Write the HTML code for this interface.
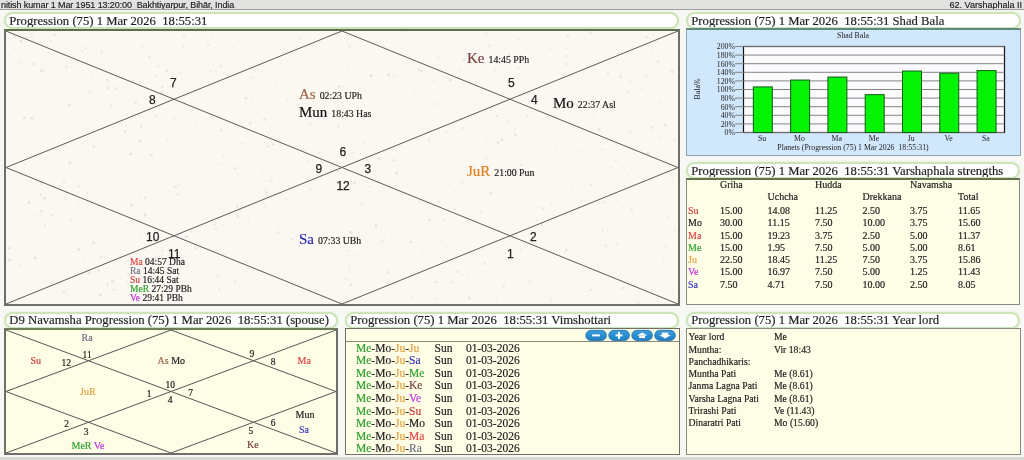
<!DOCTYPE html>
<html><head><meta charset="utf-8">
<style>
*{box-sizing:border-box}
html,body{margin:0;padding:0}
body{width:1024px;height:460px;overflow:hidden;position:relative;background:#f7f8f4;font-family:"Liberation Serif",serif;color:#222}
.abs{position:absolute}
.topbar{left:0;top:0;width:1024px;height:10px;background:#e2e2e0;border-bottom:1px solid #9c9c9c;overflow:hidden;font-family:"Liberation Sans",sans-serif;font-size:9px;color:#222}
.topbar span{position:absolute;white-space:nowrap}
.pill{position:absolute;height:17px;border:2px solid #cce5b8;border-radius:9px;background:#fff;box-shadow:0 0 1.5px 0.5px #e2f1d6;font-size:12.7px;white-space:nowrap;color:#1e1e1e;overflow:hidden}
.pill span{position:absolute;left:3.3px;top:-0.4px}
.box{position:absolute}
#root{-webkit-text-stroke:0.18px currentColor}
.t{position:absolute;white-space:nowrap;line-height:1}
.num{font-family:"Liberation Sans",sans-serif;font-size:12px;color:#222;-webkit-text-stroke:0.25px #222}
.pl{font-size:15px}
.sm{font-size:9.8px;color:#222}
.n9{font-family:"Liberation Serif",serif;font-size:9.5px;color:#222;-webkit-text-stroke:0.2px #222}
</style></head><body>
<div id="root" style="position:absolute;left:0;top:0;width:1024px;height:460px;will-change:transform">
<div class="abs topbar"><span style="left:1px;top:0px;letter-spacing:-0.1px">nitish kumar 1 Mar 1951 13:20:00&nbsp; Bakhtiyarpur, Bihār, India</span><span style="right:2px;top:0px">62. Varshaphala II</span></div>
<div class="pill" style="left:4px;top:12px;width:675px"><span>Progression (75) 1 Mar 2026&nbsp; 18:55:31</span></div>
<div class="pill" style="left:686px;top:12px;width:335px"><span>Progression (75) 1 Mar 2026&nbsp; 18:55:31 Shad Bala</span></div>
<div class="pill" style="left:686px;top:162px;width:334px"><span>Progression (75) 1 Mar 2026&nbsp; 18:55:31 Varshaphala strengths</span></div>
<div class="pill" style="left:4px;top:312px;width:334px"><span style="top:-1.4px">D9 Navamsha Progression (75) 1 Mar 2026&nbsp; 18:55:31 (spouse)</span></div>
<div class="pill" style="left:345px;top:312px;width:334px"><span style="top:-1.4px">Progression (75) 1 Mar 2026&nbsp; 18:55:31 Vimshottari</span></div>
<div class="pill" style="left:686px;top:312px;width:334px"><span style="top:-1.4px">Progression (75) 1 Mar 2026&nbsp; 18:55:31 Year lord</span></div>
<div class="box" style="left:4px;top:29px;width:676px;height:277px;background:#fbf8f2;border:2px solid #6e6e6a;border-top-color:#5f6e4a"></div>
<svg class="abs" style="left:0;top:0" width="1024" height="460"><g fill="#b8a0a0"><circle cx="224.0" cy="72.9" r="1.3" fill-opacity="0.07"/><circle cx="557.3" cy="57.5" r="1.0" fill-opacity="0.07"/><circle cx="347.0" cy="42.2" r="0.8" fill-opacity="0.14"/><circle cx="168.2" cy="181.3" r="0.5" fill-opacity="0.23"/><circle cx="89.9" cy="92.5" r="1.3" fill-opacity="0.18"/><circle cx="48.4" cy="190.7" r="0.5" fill-opacity="0.26"/><circle cx="38.2" cy="264.6" r="0.7" fill-opacity="0.14"/><circle cx="369.3" cy="186.7" r="1.0" fill-opacity="0.22"/><circle cx="128.1" cy="189.6" r="1.3" fill-opacity="0.10"/><circle cx="72.3" cy="225.0" r="1.0" fill-opacity="0.07"/><circle cx="145.0" cy="216.4" r="0.8" fill-opacity="0.22"/><circle cx="319.0" cy="282.3" r="0.7" fill-opacity="0.12"/><circle cx="539.2" cy="221.4" r="0.6" fill-opacity="0.08"/><circle cx="208.2" cy="166.2" r="0.7" fill-opacity="0.21"/><circle cx="199.9" cy="297.6" r="0.5" fill-opacity="0.16"/><circle cx="117.5" cy="124.7" r="0.8" fill-opacity="0.14"/><circle cx="651.6" cy="53.0" r="1.0" fill-opacity="0.17"/><circle cx="593.6" cy="117.0" r="1.3" fill-opacity="0.13"/><circle cx="339.8" cy="248.0" r="0.5" fill-opacity="0.23"/><circle cx="639.9" cy="160.5" r="1.3" fill-opacity="0.07"/><circle cx="496.9" cy="115.9" r="1.0" fill-opacity="0.26"/><circle cx="557.7" cy="109.1" r="0.8" fill-opacity="0.24"/><circle cx="239.5" cy="286.9" r="0.7" fill-opacity="0.09"/><circle cx="85.5" cy="48.0" r="1.6" fill-opacity="0.12"/><circle cx="501.7" cy="139.8" r="1.6" fill-opacity="0.16"/><circle cx="118.5" cy="140.8" r="0.7" fill-opacity="0.24"/><circle cx="555.9" cy="266.1" r="0.7" fill-opacity="0.20"/><circle cx="667.9" cy="217.0" r="0.8" fill-opacity="0.25"/><circle cx="108.1" cy="79.8" r="0.6" fill-opacity="0.19"/><circle cx="15.1" cy="257.2" r="0.6" fill-opacity="0.11"/><circle cx="9.7" cy="145.5" r="0.7" fill-opacity="0.18"/><circle cx="220.5" cy="66.0" r="1.6" fill-opacity="0.16"/><circle cx="420.8" cy="215.3" r="0.5" fill-opacity="0.15"/><circle cx="590.6" cy="290.0" r="1.3" fill-opacity="0.22"/><circle cx="269.9" cy="140.1" r="0.5" fill-opacity="0.16"/><circle cx="275.3" cy="83.7" r="0.6" fill-opacity="0.15"/><circle cx="80.7" cy="194.8" r="0.5" fill-opacity="0.06"/><circle cx="108.3" cy="59.5" r="0.7" fill-opacity="0.18"/><circle cx="54.1" cy="88.4" r="0.8" fill-opacity="0.09"/><circle cx="176.0" cy="126.1" r="0.7" fill-opacity="0.15"/><circle cx="84.3" cy="164.3" r="0.8" fill-opacity="0.16"/><circle cx="215.9" cy="71.1" r="1.3" fill-opacity="0.13"/><circle cx="184.4" cy="256.6" r="0.6" fill-opacity="0.16"/><circle cx="144.5" cy="290.0" r="0.7" fill-opacity="0.09"/><circle cx="370.9" cy="39.3" r="1.0" fill-opacity="0.12"/><circle cx="437.8" cy="56.7" r="1.6" fill-opacity="0.11"/><circle cx="252.7" cy="77.3" r="1.6" fill-opacity="0.10"/><circle cx="369.8" cy="168.2" r="1.3" fill-opacity="0.10"/><circle cx="550.7" cy="298.9" r="1.6" fill-opacity="0.10"/><circle cx="167.4" cy="140.6" r="1.6" fill-opacity="0.11"/><circle cx="353.8" cy="128.4" r="0.5" fill-opacity="0.26"/><circle cx="536.4" cy="160.0" r="0.6" fill-opacity="0.20"/><circle cx="647.9" cy="153.2" r="1.3" fill-opacity="0.26"/><circle cx="646.9" cy="130.8" r="0.6" fill-opacity="0.08"/><circle cx="322.0" cy="123.5" r="0.8" fill-opacity="0.18"/><circle cx="610.2" cy="259.8" r="0.8" fill-opacity="0.24"/><circle cx="237.5" cy="206.3" r="1.6" fill-opacity="0.19"/><circle cx="616.6" cy="244.0" r="1.6" fill-opacity="0.10"/><circle cx="602.6" cy="149.6" r="1.3" fill-opacity="0.13"/><circle cx="543.6" cy="295.3" r="0.8" fill-opacity="0.15"/><circle cx="505.0" cy="55.0" r="0.6" fill-opacity="0.09"/><circle cx="92.1" cy="73.0" r="0.8" fill-opacity="0.22"/><circle cx="104.9" cy="256.0" r="0.8" fill-opacity="0.19"/><circle cx="241.8" cy="180.7" r="0.6" fill-opacity="0.06"/><circle cx="542.6" cy="228.8" r="0.5" fill-opacity="0.17"/><circle cx="632.5" cy="149.6" r="1.6" fill-opacity="0.10"/><circle cx="592.5" cy="39.6" r="0.6" fill-opacity="0.12"/><circle cx="168.2" cy="190.9" r="0.7" fill-opacity="0.17"/><circle cx="565.9" cy="48.5" r="1.3" fill-opacity="0.13"/><circle cx="314.0" cy="190.1" r="1.0" fill-opacity="0.14"/><circle cx="621.9" cy="167.9" r="1.0" fill-opacity="0.09"/><circle cx="349.1" cy="268.5" r="1.6" fill-opacity="0.10"/><circle cx="9.6" cy="248.6" r="0.6" fill-opacity="0.09"/><circle cx="421.8" cy="64.6" r="0.5" fill-opacity="0.13"/><circle cx="354.3" cy="182.5" r="1.6" fill-opacity="0.22"/><circle cx="598.8" cy="47.4" r="0.6" fill-opacity="0.12"/><circle cx="524.4" cy="169.6" r="1.0" fill-opacity="0.07"/><circle cx="606.0" cy="49.2" r="0.7" fill-opacity="0.18"/><circle cx="345.7" cy="170.8" r="1.3" fill-opacity="0.12"/><circle cx="347.5" cy="250.8" r="1.0" fill-opacity="0.25"/><circle cx="475.5" cy="269.5" r="0.7" fill-opacity="0.24"/><circle cx="605.1" cy="86.9" r="0.8" fill-opacity="0.09"/><circle cx="88.5" cy="151.8" r="0.5" fill-opacity="0.19"/><circle cx="294.0" cy="89.6" r="0.7" fill-opacity="0.22"/><circle cx="608.0" cy="73.9" r="1.3" fill-opacity="0.19"/><circle cx="252.3" cy="100.6" r="0.6" fill-opacity="0.25"/><circle cx="154.1" cy="290.1" r="0.8" fill-opacity="0.24"/><circle cx="116.1" cy="213.0" r="0.6" fill-opacity="0.09"/><circle cx="296.1" cy="171.7" r="0.7" fill-opacity="0.14"/><circle cx="245.9" cy="57.0" r="0.7" fill-opacity="0.06"/><circle cx="378.2" cy="151.4" r="0.5" fill-opacity="0.14"/><circle cx="353.7" cy="112.1" r="0.5" fill-opacity="0.08"/><circle cx="622.4" cy="93.9" r="0.5" fill-opacity="0.08"/><circle cx="189.2" cy="277.5" r="0.6" fill-opacity="0.11"/><circle cx="93.8" cy="146.4" r="1.3" fill-opacity="0.22"/><circle cx="180.3" cy="72.5" r="1.0" fill-opacity="0.17"/><circle cx="476.3" cy="56.2" r="0.5" fill-opacity="0.22"/><circle cx="129.8" cy="274.6" r="0.7" fill-opacity="0.25"/><circle cx="432.1" cy="249.2" r="0.5" fill-opacity="0.18"/><circle cx="156.0" cy="103.7" r="0.5" fill-opacity="0.15"/><circle cx="234.2" cy="181.9" r="0.7" fill-opacity="0.18"/><circle cx="35.9" cy="224.3" r="0.5" fill-opacity="0.25"/><circle cx="182.5" cy="81.1" r="0.7" fill-opacity="0.19"/><circle cx="362.8" cy="87.8" r="0.8" fill-opacity="0.16"/><circle cx="126.2" cy="126.0" r="0.5" fill-opacity="0.26"/><circle cx="31.8" cy="37.0" r="1.0" fill-opacity="0.17"/><circle cx="133.9" cy="160.7" r="0.8" fill-opacity="0.08"/><circle cx="555.7" cy="149.1" r="0.8" fill-opacity="0.17"/><circle cx="602.4" cy="295.0" r="0.7" fill-opacity="0.20"/><circle cx="665.2" cy="124.9" r="1.6" fill-opacity="0.24"/><circle cx="495.3" cy="69.9" r="0.7" fill-opacity="0.26"/><circle cx="567.8" cy="35.9" r="1.3" fill-opacity="0.21"/><circle cx="178.2" cy="76.2" r="0.5" fill-opacity="0.19"/><circle cx="262.2" cy="169.1" r="0.7" fill-opacity="0.18"/><circle cx="471.1" cy="44.3" r="0.6" fill-opacity="0.09"/><circle cx="305.7" cy="103.3" r="0.7" fill-opacity="0.25"/><circle cx="373.5" cy="98.2" r="0.7" fill-opacity="0.10"/><circle cx="129.6" cy="122.9" r="0.5" fill-opacity="0.15"/><circle cx="343.9" cy="86.5" r="1.0" fill-opacity="0.22"/><circle cx="67.9" cy="253.4" r="0.6" fill-opacity="0.14"/><circle cx="34.9" cy="38.1" r="0.7" fill-opacity="0.19"/><circle cx="63.6" cy="291.5" r="1.6" fill-opacity="0.21"/><circle cx="447.6" cy="226.0" r="1.0" fill-opacity="0.14"/><circle cx="225.5" cy="298.9" r="0.6" fill-opacity="0.12"/><circle cx="421.5" cy="71.2" r="1.6" fill-opacity="0.23"/><circle cx="604.6" cy="202.0" r="1.3" fill-opacity="0.20"/><circle cx="345.7" cy="278.6" r="1.6" fill-opacity="0.16"/><circle cx="566.4" cy="250.1" r="1.6" fill-opacity="0.20"/><circle cx="541.6" cy="224.7" r="1.3" fill-opacity="0.19"/><circle cx="64.0" cy="43.3" r="1.3" fill-opacity="0.13"/><circle cx="77.3" cy="258.5" r="1.0" fill-opacity="0.07"/><circle cx="19.6" cy="176.0" r="0.6" fill-opacity="0.16"/><circle cx="9.2" cy="248.2" r="1.3" fill-opacity="0.25"/><circle cx="608.6" cy="56.9" r="1.0" fill-opacity="0.07"/><circle cx="500.6" cy="100.3" r="0.5" fill-opacity="0.23"/><circle cx="164.3" cy="237.0" r="0.6" fill-opacity="0.21"/><circle cx="660.7" cy="165.9" r="0.8" fill-opacity="0.08"/><circle cx="617.0" cy="109.9" r="0.5" fill-opacity="0.18"/><circle cx="437.7" cy="53.0" r="0.6" fill-opacity="0.13"/><circle cx="443.5" cy="219.8" r="1.0" fill-opacity="0.17"/><circle cx="15.4" cy="48.4" r="0.7" fill-opacity="0.25"/><circle cx="73.7" cy="91.0" r="0.8" fill-opacity="0.12"/><circle cx="353.1" cy="157.9" r="0.8" fill-opacity="0.21"/><circle cx="672.5" cy="180.8" r="0.7" fill-opacity="0.26"/><circle cx="634.3" cy="36.7" r="0.8" fill-opacity="0.08"/><circle cx="346.4" cy="301.5" r="0.7" fill-opacity="0.14"/><circle cx="621.1" cy="284.2" r="0.5" fill-opacity="0.18"/><circle cx="102.0" cy="174.0" r="0.7" fill-opacity="0.09"/><circle cx="556.5" cy="169.9" r="0.5" fill-opacity="0.20"/><circle cx="162.0" cy="275.3" r="0.8" fill-opacity="0.14"/><circle cx="113.6" cy="289.4" r="1.3" fill-opacity="0.15"/><circle cx="209.3" cy="70.1" r="0.7" fill-opacity="0.14"/><circle cx="88.0" cy="121.8" r="0.7" fill-opacity="0.21"/><circle cx="569.2" cy="64.5" r="0.6" fill-opacity="0.20"/><circle cx="611.0" cy="110.5" r="0.7" fill-opacity="0.07"/><circle cx="268.4" cy="267.8" r="0.5" fill-opacity="0.13"/><circle cx="293.8" cy="106.6" r="0.5" fill-opacity="0.12"/><circle cx="41.6" cy="211.4" r="1.3" fill-opacity="0.25"/><circle cx="174.0" cy="104.0" r="1.0" fill-opacity="0.12"/><circle cx="525.0" cy="244.8" r="0.8" fill-opacity="0.24"/><circle cx="551.0" cy="203.0" r="1.0" fill-opacity="0.17"/><circle cx="489.1" cy="45.4" r="1.3" fill-opacity="0.14"/><circle cx="419.0" cy="69.6" r="1.6" fill-opacity="0.12"/><circle cx="39.8" cy="283.2" r="0.6" fill-opacity="0.09"/><circle cx="285.0" cy="108.4" r="0.7" fill-opacity="0.21"/><circle cx="661.1" cy="102.5" r="1.3" fill-opacity="0.11"/><circle cx="330.7" cy="213.3" r="0.5" fill-opacity="0.09"/><circle cx="115.3" cy="88.3" r="1.6" fill-opacity="0.16"/><circle cx="154.4" cy="277.6" r="1.6" fill-opacity="0.15"/><circle cx="100.5" cy="84.1" r="0.5" fill-opacity="0.09"/><circle cx="379.4" cy="118.5" r="0.7" fill-opacity="0.11"/><circle cx="388.6" cy="272.4" r="1.3" fill-opacity="0.23"/><circle cx="263.5" cy="234.1" r="0.6" fill-opacity="0.14"/><circle cx="233.6" cy="48.8" r="0.7" fill-opacity="0.17"/><circle cx="248.3" cy="218.1" r="1.0" fill-opacity="0.19"/><circle cx="585.1" cy="90.5" r="0.7" fill-opacity="0.24"/><circle cx="264.7" cy="207.0" r="0.8" fill-opacity="0.25"/><circle cx="575.6" cy="268.6" r="0.5" fill-opacity="0.09"/><circle cx="291.9" cy="239.0" r="1.6" fill-opacity="0.15"/><circle cx="400.4" cy="32.0" r="0.8" fill-opacity="0.25"/><circle cx="628.9" cy="175.1" r="0.8" fill-opacity="0.25"/><circle cx="173.5" cy="61.6" r="0.6" fill-opacity="0.09"/><circle cx="658.2" cy="61.5" r="1.6" fill-opacity="0.20"/><circle cx="440.7" cy="239.3" r="0.8" fill-opacity="0.08"/><circle cx="527.5" cy="32.4" r="0.6" fill-opacity="0.11"/><circle cx="623.3" cy="206.9" r="0.7" fill-opacity="0.25"/><circle cx="426.7" cy="175.2" r="0.8" fill-opacity="0.20"/><circle cx="82.1" cy="51.1" r="1.0" fill-opacity="0.25"/><circle cx="135.4" cy="102.7" r="1.6" fill-opacity="0.18"/><circle cx="14.0" cy="113.7" r="0.8" fill-opacity="0.12"/><circle cx="219.0" cy="259.5" r="0.6" fill-opacity="0.16"/><circle cx="164.3" cy="99.0" r="0.8" fill-opacity="0.20"/><circle cx="213.0" cy="37.9" r="0.8" fill-opacity="0.24"/><circle cx="440.6" cy="54.0" r="0.6" fill-opacity="0.19"/><circle cx="626.9" cy="93.5" r="0.5" fill-opacity="0.20"/><circle cx="488.3" cy="130.2" r="0.8" fill-opacity="0.10"/><circle cx="541.0" cy="232.3" r="1.0" fill-opacity="0.07"/><circle cx="339.1" cy="86.3" r="1.6" fill-opacity="0.22"/><circle cx="161.6" cy="92.0" r="1.6" fill-opacity="0.24"/><circle cx="80.0" cy="201.0" r="1.0" fill-opacity="0.10"/><circle cx="156.6" cy="145.0" r="1.3" fill-opacity="0.07"/><circle cx="405.5" cy="281.8" r="0.5" fill-opacity="0.10"/><circle cx="659.7" cy="70.5" r="0.5" fill-opacity="0.20"/><circle cx="130.4" cy="153.9" r="1.3" fill-opacity="0.24"/><circle cx="497.9" cy="302.3" r="0.6" fill-opacity="0.13"/><circle cx="131.3" cy="285.6" r="1.3" fill-opacity="0.15"/><circle cx="215.9" cy="228.6" r="1.6" fill-opacity="0.13"/><circle cx="229.2" cy="77.9" r="0.5" fill-opacity="0.08"/><circle cx="61.1" cy="145.9" r="0.5" fill-opacity="0.17"/><circle cx="515.4" cy="135.0" r="1.6" fill-opacity="0.22"/><circle cx="557.7" cy="149.2" r="0.5" fill-opacity="0.20"/><circle cx="138.1" cy="178.8" r="0.8" fill-opacity="0.10"/><circle cx="251.0" cy="275.1" r="0.5" fill-opacity="0.19"/><circle cx="173.2" cy="201.5" r="0.8" fill-opacity="0.07"/><circle cx="30.4" cy="49.0" r="0.5" fill-opacity="0.11"/><circle cx="507.7" cy="275.5" r="0.7" fill-opacity="0.13"/><circle cx="231.4" cy="290.5" r="0.5" fill-opacity="0.11"/><circle cx="487.1" cy="117.8" r="0.7" fill-opacity="0.12"/><circle cx="490.5" cy="193.4" r="1.6" fill-opacity="0.19"/><circle cx="639.0" cy="38.6" r="0.6" fill-opacity="0.08"/><circle cx="486.4" cy="158.2" r="1.6" fill-opacity="0.14"/><circle cx="175.2" cy="148.5" r="0.8" fill-opacity="0.09"/><circle cx="339.7" cy="34.4" r="1.3" fill-opacity="0.12"/><circle cx="470.7" cy="73.0" r="0.6" fill-opacity="0.13"/><circle cx="221.1" cy="130.1" r="1.6" fill-opacity="0.18"/><circle cx="350.0" cy="138.1" r="0.6" fill-opacity="0.11"/><circle cx="50.4" cy="41.2" r="1.0" fill-opacity="0.17"/><circle cx="114.7" cy="147.6" r="0.5" fill-opacity="0.26"/><circle cx="184.5" cy="54.8" r="0.5" fill-opacity="0.14"/><circle cx="669.2" cy="295.4" r="0.6" fill-opacity="0.11"/><circle cx="286.3" cy="200.1" r="1.3" fill-opacity="0.11"/><circle cx="367.8" cy="241.7" r="1.6" fill-opacity="0.08"/><circle cx="570.4" cy="111.6" r="1.0" fill-opacity="0.11"/><circle cx="177.2" cy="102.6" r="0.8" fill-opacity="0.11"/><circle cx="171.4" cy="73.6" r="1.0" fill-opacity="0.10"/><circle cx="50.4" cy="100.2" r="0.6" fill-opacity="0.16"/><circle cx="162.0" cy="251.1" r="1.3" fill-opacity="0.15"/><circle cx="31.8" cy="33.2" r="1.6" fill-opacity="0.11"/><circle cx="307.4" cy="133.3" r="0.7" fill-opacity="0.11"/><circle cx="40.8" cy="194.7" r="1.6" fill-opacity="0.18"/><circle cx="630.2" cy="132.9" r="1.6" fill-opacity="0.10"/><circle cx="411.0" cy="242.0" r="1.3" fill-opacity="0.25"/><circle cx="77.9" cy="193.6" r="1.0" fill-opacity="0.13"/><circle cx="32.1" cy="124.1" r="0.5" fill-opacity="0.10"/><circle cx="177.8" cy="194.4" r="1.3" fill-opacity="0.24"/><circle cx="552.9" cy="253.9" r="0.8" fill-opacity="0.20"/><circle cx="131.0" cy="116.6" r="0.6" fill-opacity="0.07"/><circle cx="339.1" cy="163.0" r="0.8" fill-opacity="0.08"/><circle cx="271.8" cy="181.1" r="1.3" fill-opacity="0.17"/><circle cx="444.5" cy="139.8" r="0.7" fill-opacity="0.14"/><circle cx="196.8" cy="115.4" r="0.5" fill-opacity="0.12"/><circle cx="386.6" cy="128.8" r="0.8" fill-opacity="0.06"/><circle cx="520.7" cy="249.4" r="1.3" fill-opacity="0.10"/><circle cx="494.8" cy="87.2" r="0.5" fill-opacity="0.15"/><circle cx="111.9" cy="62.8" r="0.5" fill-opacity="0.14"/><circle cx="598.5" cy="156.9" r="0.6" fill-opacity="0.09"/><circle cx="41.6" cy="70.6" r="1.6" fill-opacity="0.24"/><circle cx="66.7" cy="200.6" r="0.7" fill-opacity="0.21"/><circle cx="122.0" cy="126.3" r="0.6" fill-opacity="0.16"/><circle cx="627.1" cy="61.5" r="0.8" fill-opacity="0.21"/><circle cx="537.7" cy="250.1" r="0.7" fill-opacity="0.09"/><circle cx="638.9" cy="296.4" r="0.8" fill-opacity="0.12"/><circle cx="414.1" cy="204.5" r="0.5" fill-opacity="0.24"/><circle cx="422.6" cy="255.5" r="0.6" fill-opacity="0.19"/><circle cx="580.9" cy="200.3" r="1.0" fill-opacity="0.23"/><circle cx="562.6" cy="81.6" r="0.6" fill-opacity="0.07"/><circle cx="635.8" cy="74.4" r="0.7" fill-opacity="0.08"/><circle cx="172.5" cy="228.4" r="0.6" fill-opacity="0.07"/><circle cx="383.8" cy="237.3" r="0.5" fill-opacity="0.19"/><circle cx="224.2" cy="137.6" r="0.8" fill-opacity="0.17"/><circle cx="427.1" cy="115.0" r="0.8" fill-opacity="0.12"/><circle cx="174.0" cy="137.5" r="0.7" fill-opacity="0.15"/><circle cx="300.7" cy="38.3" r="1.0" fill-opacity="0.26"/><circle cx="318.7" cy="153.1" r="1.0" fill-opacity="0.22"/><circle cx="314.1" cy="80.7" r="0.8" fill-opacity="0.14"/><circle cx="52.0" cy="129.2" r="0.7" fill-opacity="0.08"/><circle cx="303.1" cy="170.3" r="0.5" fill-opacity="0.07"/><circle cx="94.3" cy="281.9" r="0.7" fill-opacity="0.22"/><circle cx="349.7" cy="46.7" r="1.0" fill-opacity="0.24"/><circle cx="444.3" cy="244.5" r="0.5" fill-opacity="0.23"/><circle cx="674.4" cy="230.4" r="1.6" fill-opacity="0.08"/><circle cx="95.2" cy="272.0" r="0.7" fill-opacity="0.25"/><circle cx="620.7" cy="76.7" r="1.6" fill-opacity="0.20"/><circle cx="155.2" cy="257.8" r="1.0" fill-opacity="0.21"/><circle cx="113.4" cy="275.0" r="0.7" fill-opacity="0.24"/><circle cx="312.8" cy="100.9" r="0.8" fill-opacity="0.10"/><circle cx="183.1" cy="169.1" r="0.7" fill-opacity="0.13"/><circle cx="140.3" cy="141.3" r="1.3" fill-opacity="0.25"/><circle cx="462.4" cy="274.7" r="0.6" fill-opacity="0.22"/><circle cx="184.1" cy="240.2" r="0.5" fill-opacity="0.19"/><circle cx="248.1" cy="268.6" r="1.0" fill-opacity="0.16"/><circle cx="468.4" cy="274.8" r="0.7" fill-opacity="0.26"/><circle cx="429.0" cy="138.8" r="1.6" fill-opacity="0.13"/><circle cx="258.7" cy="132.0" r="0.6" fill-opacity="0.13"/><circle cx="519.3" cy="151.9" r="0.6" fill-opacity="0.18"/><circle cx="648.8" cy="112.3" r="1.0" fill-opacity="0.11"/><circle cx="435.3" cy="298.7" r="1.0" fill-opacity="0.25"/><circle cx="607.1" cy="230.7" r="1.3" fill-opacity="0.07"/><circle cx="107.1" cy="199.0" r="0.8" fill-opacity="0.14"/><circle cx="250.9" cy="44.9" r="0.8" fill-opacity="0.11"/><circle cx="444.6" cy="38.0" r="0.5" fill-opacity="0.17"/><circle cx="210.5" cy="173.8" r="1.0" fill-opacity="0.10"/><circle cx="398.0" cy="191.6" r="0.6" fill-opacity="0.13"/><circle cx="562.1" cy="75.0" r="0.5" fill-opacity="0.25"/><circle cx="170.2" cy="72.5" r="0.5" fill-opacity="0.07"/><circle cx="103.9" cy="212.3" r="0.7" fill-opacity="0.14"/><circle cx="184.0" cy="35.1" r="1.3" fill-opacity="0.22"/><circle cx="605.1" cy="193.2" r="1.0" fill-opacity="0.15"/><circle cx="634.9" cy="230.8" r="0.6" fill-opacity="0.09"/><circle cx="7.3" cy="48.7" r="0.5" fill-opacity="0.14"/><circle cx="166.2" cy="47.8" r="1.6" fill-opacity="0.08"/><circle cx="417.5" cy="210.0" r="0.6" fill-opacity="0.09"/><circle cx="140.7" cy="196.8" r="1.0" fill-opacity="0.19"/><circle cx="285.2" cy="198.2" r="1.0" fill-opacity="0.12"/><circle cx="208.2" cy="45.1" r="1.3" fill-opacity="0.22"/><circle cx="486.3" cy="33.7" r="1.6" fill-opacity="0.15"/><circle cx="618.2" cy="53.8" r="1.3" fill-opacity="0.15"/><circle cx="158.4" cy="60.5" r="0.6" fill-opacity="0.19"/><circle cx="89.6" cy="273.5" r="1.3" fill-opacity="0.25"/><circle cx="183.4" cy="46.2" r="1.3" fill-opacity="0.17"/><circle cx="299.2" cy="245.7" r="1.0" fill-opacity="0.25"/><circle cx="205.1" cy="283.6" r="0.6" fill-opacity="0.08"/><circle cx="347.0" cy="78.0" r="0.6" fill-opacity="0.23"/><circle cx="142.9" cy="75.1" r="0.7" fill-opacity="0.10"/><circle cx="267.4" cy="194.9" r="0.8" fill-opacity="0.24"/><circle cx="429.6" cy="219.8" r="1.3" fill-opacity="0.23"/><circle cx="366.4" cy="160.0" r="1.0" fill-opacity="0.20"/><circle cx="581.5" cy="150.5" r="1.3" fill-opacity="0.11"/><circle cx="599.8" cy="245.9" r="0.8" fill-opacity="0.18"/><circle cx="59.1" cy="278.8" r="0.6" fill-opacity="0.07"/><circle cx="82.0" cy="200.6" r="0.6" fill-opacity="0.13"/><circle cx="102.0" cy="39.8" r="0.5" fill-opacity="0.09"/><circle cx="438.2" cy="43.6" r="0.5" fill-opacity="0.21"/><circle cx="51.1" cy="192.0" r="0.7" fill-opacity="0.10"/><circle cx="646.6" cy="176.7" r="1.3" fill-opacity="0.07"/><circle cx="588.4" cy="279.8" r="0.8" fill-opacity="0.08"/><circle cx="144.8" cy="62.3" r="0.5" fill-opacity="0.25"/><circle cx="617.4" cy="236.3" r="0.5" fill-opacity="0.23"/><circle cx="430.1" cy="109.9" r="0.5" fill-opacity="0.09"/><circle cx="537.6" cy="207.2" r="0.7" fill-opacity="0.12"/><circle cx="290.9" cy="37.7" r="0.7" fill-opacity="0.25"/><circle cx="39.4" cy="237.9" r="0.7" fill-opacity="0.21"/><circle cx="410.3" cy="161.0" r="0.7" fill-opacity="0.18"/><circle cx="27.8" cy="143.9" r="0.8" fill-opacity="0.16"/><circle cx="72.9" cy="159.1" r="0.5" fill-opacity="0.17"/><circle cx="152.1" cy="265.7" r="0.5" fill-opacity="0.17"/><circle cx="199.4" cy="150.2" r="1.0" fill-opacity="0.10"/><circle cx="517.7" cy="297.0" r="0.5" fill-opacity="0.13"/><circle cx="71.1" cy="220.4" r="1.6" fill-opacity="0.10"/><circle cx="338.4" cy="126.1" r="1.6" fill-opacity="0.16"/><circle cx="394.3" cy="75.1" r="1.6" fill-opacity="0.10"/><circle cx="475.7" cy="167.0" r="0.5" fill-opacity="0.25"/><circle cx="520.8" cy="164.9" r="1.3" fill-opacity="0.17"/><circle cx="77.1" cy="120.5" r="0.5" fill-opacity="0.14"/><circle cx="271.4" cy="273.3" r="0.5" fill-opacity="0.14"/><circle cx="439.7" cy="132.8" r="0.7" fill-opacity="0.11"/><circle cx="610.8" cy="167.8" r="0.8" fill-opacity="0.26"/><circle cx="429.6" cy="287.8" r="0.6" fill-opacity="0.17"/><circle cx="512.5" cy="236.1" r="1.3" fill-opacity="0.07"/><circle cx="396.7" cy="173.4" r="1.6" fill-opacity="0.23"/><circle cx="450.6" cy="233.1" r="0.6" fill-opacity="0.15"/><circle cx="468.7" cy="101.7" r="0.6" fill-opacity="0.09"/><circle cx="316.6" cy="271.9" r="0.6" fill-opacity="0.16"/><circle cx="186.2" cy="236.5" r="1.6" fill-opacity="0.23"/><circle cx="110.6" cy="74.3" r="0.6" fill-opacity="0.20"/><circle cx="410.9" cy="126.5" r="0.6" fill-opacity="0.13"/><circle cx="133.8" cy="296.3" r="1.3" fill-opacity="0.26"/><circle cx="117.3" cy="210.3" r="0.6" fill-opacity="0.14"/><circle cx="666.2" cy="247.4" r="1.3" fill-opacity="0.12"/><circle cx="190.5" cy="61.6" r="0.5" fill-opacity="0.12"/><circle cx="600.1" cy="157.7" r="0.5" fill-opacity="0.14"/><circle cx="537.0" cy="219.9" r="1.0" fill-opacity="0.26"/><circle cx="205.5" cy="38.0" r="0.7" fill-opacity="0.18"/><circle cx="278.2" cy="232.8" r="1.6" fill-opacity="0.15"/><circle cx="391.6" cy="235.0" r="0.8" fill-opacity="0.23"/><circle cx="454.5" cy="208.8" r="1.6" fill-opacity="0.19"/><circle cx="398.1" cy="94.0" r="0.6" fill-opacity="0.19"/><circle cx="311.1" cy="116.8" r="1.3" fill-opacity="0.20"/><circle cx="606.5" cy="97.7" r="0.8" fill-opacity="0.20"/><circle cx="428.8" cy="99.8" r="0.8" fill-opacity="0.16"/><circle cx="20.2" cy="264.7" r="1.0" fill-opacity="0.20"/><circle cx="630.2" cy="81.6" r="1.3" fill-opacity="0.13"/><circle cx="14.1" cy="257.4" r="0.5" fill-opacity="0.07"/><circle cx="371.1" cy="75.6" r="1.6" fill-opacity="0.25"/><circle cx="140.9" cy="126.4" r="1.6" fill-opacity="0.17"/><circle cx="369.5" cy="226.4" r="1.0" fill-opacity="0.06"/><circle cx="538.0" cy="132.2" r="0.7" fill-opacity="0.14"/><circle cx="642.1" cy="88.9" r="1.3" fill-opacity="0.10"/><circle cx="351.2" cy="284.8" r="1.3" fill-opacity="0.26"/><circle cx="245.2" cy="47.3" r="0.7" fill-opacity="0.14"/><circle cx="48.2" cy="52.4" r="0.8" fill-opacity="0.19"/><circle cx="459.2" cy="189.2" r="0.5" fill-opacity="0.10"/><circle cx="503.8" cy="286.7" r="1.0" fill-opacity="0.25"/><circle cx="673.1" cy="292.4" r="0.8" fill-opacity="0.10"/><circle cx="93.6" cy="242.5" r="1.6" fill-opacity="0.22"/><circle cx="136.4" cy="206.0" r="1.3" fill-opacity="0.11"/><circle cx="652.8" cy="127.7" r="1.3" fill-opacity="0.23"/><circle cx="539.8" cy="144.0" r="0.7" fill-opacity="0.21"/><circle cx="442.2" cy="243.3" r="0.8" fill-opacity="0.13"/><circle cx="576.9" cy="104.5" r="0.8" fill-opacity="0.20"/><circle cx="665.5" cy="216.0" r="0.8" fill-opacity="0.06"/><circle cx="490.6" cy="108.2" r="0.6" fill-opacity="0.19"/><circle cx="221.6" cy="163.4" r="1.0" fill-opacity="0.19"/><circle cx="448.7" cy="130.2" r="0.7" fill-opacity="0.23"/><circle cx="45.2" cy="256.4" r="0.7" fill-opacity="0.22"/><circle cx="101.1" cy="257.3" r="1.3" fill-opacity="0.18"/><circle cx="447.4" cy="88.8" r="0.5" fill-opacity="0.19"/><circle cx="174.5" cy="59.5" r="0.6" fill-opacity="0.23"/><circle cx="131.4" cy="154.5" r="1.6" fill-opacity="0.09"/><circle cx="612.7" cy="246.5" r="0.6" fill-opacity="0.18"/><circle cx="468.0" cy="296.8" r="0.5" fill-opacity="0.19"/><circle cx="605.9" cy="245.6" r="1.6" fill-opacity="0.12"/><circle cx="338.3" cy="89.8" r="0.5" fill-opacity="0.21"/><circle cx="300.9" cy="271.2" r="1.0" fill-opacity="0.08"/><circle cx="287.8" cy="256.1" r="0.8" fill-opacity="0.16"/><circle cx="46.2" cy="158.6" r="0.6" fill-opacity="0.20"/><circle cx="172.2" cy="76.6" r="1.0" fill-opacity="0.23"/><circle cx="11.4" cy="259.8" r="0.8" fill-opacity="0.20"/><circle cx="340.4" cy="112.4" r="0.8" fill-opacity="0.13"/><circle cx="287.6" cy="292.3" r="0.5" fill-opacity="0.10"/><circle cx="248.5" cy="207.2" r="0.5" fill-opacity="0.18"/><circle cx="464.3" cy="284.4" r="0.7" fill-opacity="0.22"/><circle cx="70.0" cy="163.2" r="1.6" fill-opacity="0.24"/><circle cx="29.7" cy="226.6" r="1.3" fill-opacity="0.09"/><circle cx="70.3" cy="210.6" r="0.7" fill-opacity="0.15"/><circle cx="359.1" cy="240.8" r="0.6" fill-opacity="0.12"/><circle cx="236.1" cy="100.2" r="0.5" fill-opacity="0.23"/><circle cx="203.2" cy="256.3" r="0.8" fill-opacity="0.13"/><circle cx="666.5" cy="268.6" r="0.7" fill-opacity="0.25"/><circle cx="445.6" cy="246.6" r="0.7" fill-opacity="0.10"/><circle cx="484.8" cy="66.6" r="1.3" fill-opacity="0.08"/><circle cx="674.7" cy="140.1" r="1.0" fill-opacity="0.24"/><circle cx="372.4" cy="45.5" r="0.7" fill-opacity="0.08"/><circle cx="38.1" cy="254.8" r="0.8" fill-opacity="0.18"/><circle cx="447.9" cy="245.8" r="1.0" fill-opacity="0.18"/><circle cx="420.2" cy="201.9" r="1.3" fill-opacity="0.20"/><circle cx="594.1" cy="54.5" r="0.5" fill-opacity="0.19"/><circle cx="313.8" cy="238.7" r="0.5" fill-opacity="0.19"/><circle cx="589.4" cy="146.2" r="0.5" fill-opacity="0.24"/><circle cx="446.3" cy="132.0" r="1.6" fill-opacity="0.09"/><circle cx="214.3" cy="224.4" r="1.6" fill-opacity="0.12"/><circle cx="289.6" cy="118.3" r="0.8" fill-opacity="0.17"/><circle cx="394.4" cy="279.6" r="0.8" fill-opacity="0.17"/><circle cx="33.4" cy="64.2" r="1.6" fill-opacity="0.14"/><circle cx="473.1" cy="141.7" r="0.5" fill-opacity="0.06"/><circle cx="266.4" cy="192.4" r="1.3" fill-opacity="0.26"/><circle cx="325.6" cy="143.8" r="0.5" fill-opacity="0.08"/><circle cx="323.4" cy="274.8" r="1.3" fill-opacity="0.06"/><circle cx="10.2" cy="217.3" r="0.5" fill-opacity="0.26"/><circle cx="582.2" cy="91.1" r="0.5" fill-opacity="0.09"/><circle cx="18.9" cy="226.9" r="0.6" fill-opacity="0.15"/><circle cx="505.6" cy="282.1" r="0.7" fill-opacity="0.21"/><circle cx="485.1" cy="263.8" r="1.3" fill-opacity="0.21"/><circle cx="203.4" cy="183.1" r="0.8" fill-opacity="0.15"/><circle cx="631.7" cy="100.8" r="0.5" fill-opacity="0.20"/><circle cx="14.6" cy="36.0" r="1.3" fill-opacity="0.20"/><circle cx="421.2" cy="137.4" r="0.7" fill-opacity="0.21"/><circle cx="118.2" cy="265.3" r="0.8" fill-opacity="0.18"/><circle cx="218.9" cy="289.1" r="1.3" fill-opacity="0.15"/><circle cx="460.5" cy="71.3" r="1.6" fill-opacity="0.08"/><circle cx="646.1" cy="76.5" r="1.6" fill-opacity="0.14"/><circle cx="265.4" cy="245.1" r="0.7" fill-opacity="0.22"/><circle cx="386.8" cy="111.2" r="0.5" fill-opacity="0.18"/><circle cx="443.1" cy="249.3" r="1.0" fill-opacity="0.13"/><circle cx="412.9" cy="296.9" r="1.6" fill-opacity="0.09"/><circle cx="564.9" cy="190.4" r="0.6" fill-opacity="0.14"/><circle cx="465.8" cy="195.1" r="0.6" fill-opacity="0.22"/><circle cx="196.8" cy="32.5" r="0.7" fill-opacity="0.11"/><circle cx="112.4" cy="281.5" r="1.6" fill-opacity="0.24"/><circle cx="35.3" cy="257.8" r="1.6" fill-opacity="0.24"/><circle cx="672.2" cy="71.8" r="1.6" fill-opacity="0.22"/><circle cx="374.1" cy="242.6" r="0.8" fill-opacity="0.13"/><circle cx="64.0" cy="182.0" r="1.6" fill-opacity="0.14"/><circle cx="534.8" cy="227.7" r="0.6" fill-opacity="0.12"/><circle cx="45.6" cy="139.2" r="1.3" fill-opacity="0.10"/><circle cx="177.7" cy="235.6" r="1.6" fill-opacity="0.14"/><circle cx="369.2" cy="177.3" r="0.7" fill-opacity="0.21"/><circle cx="163.0" cy="189.1" r="0.7" fill-opacity="0.24"/><circle cx="356.6" cy="161.2" r="1.0" fill-opacity="0.10"/><circle cx="149.5" cy="57.0" r="1.6" fill-opacity="0.20"/><circle cx="250.1" cy="185.0" r="0.8" fill-opacity="0.22"/><circle cx="581.2" cy="98.7" r="0.8" fill-opacity="0.13"/><circle cx="78.1" cy="203.5" r="1.6" fill-opacity="0.08"/><circle cx="218.6" cy="40.2" r="0.7" fill-opacity="0.16"/><circle cx="20.8" cy="41.1" r="1.6" fill-opacity="0.23"/><circle cx="332.8" cy="185.7" r="0.7" fill-opacity="0.25"/><circle cx="194.5" cy="58.3" r="0.8" fill-opacity="0.21"/><circle cx="555.6" cy="293.1" r="0.7" fill-opacity="0.23"/><circle cx="234.0" cy="301.5" r="0.8" fill-opacity="0.08"/><circle cx="41.2" cy="183.1" r="1.6" fill-opacity="0.20"/><circle cx="333.2" cy="261.2" r="0.5" fill-opacity="0.23"/><circle cx="435.7" cy="281.9" r="1.3" fill-opacity="0.25"/><circle cx="179.3" cy="185.0" r="1.3" fill-opacity="0.08"/><circle cx="624.0" cy="169.3" r="0.6" fill-opacity="0.15"/><circle cx="114.0" cy="293.7" r="1.3" fill-opacity="0.10"/><circle cx="32.9" cy="101.3" r="0.7" fill-opacity="0.07"/><circle cx="377.4" cy="39.5" r="0.5" fill-opacity="0.11"/><circle cx="350.9" cy="232.4" r="1.6" fill-opacity="0.26"/><circle cx="44.4" cy="71.2" r="1.6" fill-opacity="0.06"/><circle cx="140.3" cy="234.8" r="1.0" fill-opacity="0.18"/><circle cx="514.8" cy="60.6" r="0.7" fill-opacity="0.13"/><circle cx="268.3" cy="133.6" r="0.8" fill-opacity="0.09"/><circle cx="166.8" cy="70.8" r="1.3" fill-opacity="0.24"/><circle cx="320.5" cy="279.3" r="1.6" fill-opacity="0.07"/><circle cx="628.5" cy="91.8" r="1.0" fill-opacity="0.23"/><circle cx="602.4" cy="69.9" r="0.8" fill-opacity="0.25"/><circle cx="627.4" cy="136.4" r="0.5" fill-opacity="0.19"/><circle cx="310.1" cy="124.1" r="1.6" fill-opacity="0.11"/><circle cx="84.5" cy="131.2" r="0.7" fill-opacity="0.10"/><circle cx="45.0" cy="225.4" r="1.0" fill-opacity="0.24"/><circle cx="301.1" cy="72.5" r="0.8" fill-opacity="0.14"/><circle cx="111.3" cy="105.5" r="1.6" fill-opacity="0.12"/><circle cx="545.8" cy="102.6" r="0.5" fill-opacity="0.12"/><circle cx="612.1" cy="62.9" r="1.0" fill-opacity="0.07"/><circle cx="606.7" cy="213.1" r="0.6" fill-opacity="0.17"/><circle cx="566.6" cy="64.3" r="1.6" fill-opacity="0.10"/><circle cx="251.1" cy="300.6" r="0.6" fill-opacity="0.25"/><circle cx="72.4" cy="110.4" r="0.6" fill-opacity="0.07"/><circle cx="493.7" cy="111.5" r="1.3" fill-opacity="0.06"/><circle cx="547.7" cy="124.4" r="0.6" fill-opacity="0.15"/><circle cx="536.0" cy="287.7" r="0.7" fill-opacity="0.10"/><circle cx="298.6" cy="279.1" r="0.6" fill-opacity="0.12"/><circle cx="128.1" cy="260.6" r="1.0" fill-opacity="0.21"/><circle cx="483.8" cy="85.3" r="0.5" fill-opacity="0.23"/><circle cx="602.8" cy="230.1" r="1.6" fill-opacity="0.11"/><circle cx="145.0" cy="198.0" r="1.3" fill-opacity="0.19"/><circle cx="135.8" cy="115.5" r="0.5" fill-opacity="0.07"/><circle cx="497.9" cy="142.6" r="1.3" fill-opacity="0.24"/><circle cx="354.4" cy="126.2" r="0.7" fill-opacity="0.23"/><circle cx="586.2" cy="165.6" r="0.5" fill-opacity="0.14"/><circle cx="518.2" cy="68.1" r="1.3" fill-opacity="0.11"/><circle cx="131.7" cy="257.4" r="0.7" fill-opacity="0.07"/><circle cx="477.5" cy="187.8" r="1.6" fill-opacity="0.06"/><circle cx="355.3" cy="152.8" r="1.0" fill-opacity="0.07"/><circle cx="246.0" cy="98.3" r="1.6" fill-opacity="0.23"/><circle cx="222.1" cy="224.7" r="0.8" fill-opacity="0.18"/><circle cx="608.7" cy="111.0" r="0.5" fill-opacity="0.25"/><circle cx="338.5" cy="171.1" r="1.0" fill-opacity="0.22"/><circle cx="97.0" cy="98.0" r="0.5" fill-opacity="0.10"/><circle cx="129.2" cy="59.8" r="0.7" fill-opacity="0.17"/><circle cx="647.1" cy="37.3" r="1.3" fill-opacity="0.21"/><circle cx="182.2" cy="258.9" r="1.3" fill-opacity="0.18"/><circle cx="357.4" cy="222.4" r="0.5" fill-opacity="0.13"/><circle cx="69.9" cy="80.5" r="0.7" fill-opacity="0.08"/><circle cx="337.7" cy="167.7" r="0.7" fill-opacity="0.08"/><circle cx="88.4" cy="271.7" r="1.0" fill-opacity="0.18"/><circle cx="583.9" cy="71.9" r="1.0" fill-opacity="0.15"/><circle cx="272.7" cy="289.0" r="0.5" fill-opacity="0.25"/><circle cx="267.5" cy="146.0" r="1.6" fill-opacity="0.18"/><circle cx="31.3" cy="295.0" r="0.5" fill-opacity="0.22"/><circle cx="233.8" cy="97.1" r="0.7" fill-opacity="0.20"/><circle cx="571.8" cy="185.0" r="0.7" fill-opacity="0.22"/><circle cx="574.9" cy="46.5" r="1.0" fill-opacity="0.09"/><circle cx="462.7" cy="127.8" r="1.6" fill-opacity="0.14"/><circle cx="430.9" cy="130.8" r="1.0" fill-opacity="0.10"/><circle cx="224.3" cy="86.4" r="1.3" fill-opacity="0.06"/><circle cx="100.4" cy="294.8" r="1.6" fill-opacity="0.26"/><circle cx="311.0" cy="44.7" r="0.5" fill-opacity="0.07"/><circle cx="436.9" cy="104.0" r="1.3" fill-opacity="0.18"/><circle cx="427.9" cy="250.5" r="0.5" fill-opacity="0.18"/><circle cx="174.9" cy="173.0" r="0.8" fill-opacity="0.11"/><circle cx="33.4" cy="62.6" r="0.7" fill-opacity="0.19"/><circle cx="87.7" cy="193.1" r="1.0" fill-opacity="0.24"/><circle cx="63.6" cy="192.0" r="0.6" fill-opacity="0.15"/><circle cx="349.8" cy="271.9" r="0.8" fill-opacity="0.18"/><circle cx="190.7" cy="231.4" r="1.3" fill-opacity="0.17"/><circle cx="569.6" cy="197.3" r="1.0" fill-opacity="0.10"/><circle cx="266.1" cy="180.7" r="0.7" fill-opacity="0.15"/><circle cx="374.2" cy="198.1" r="0.8" fill-opacity="0.22"/><circle cx="27.7" cy="122.4" r="0.6" fill-opacity="0.16"/><circle cx="263.7" cy="190.7" r="0.5" fill-opacity="0.24"/><circle cx="115.7" cy="290.0" r="0.7" fill-opacity="0.17"/><circle cx="336.2" cy="109.2" r="0.6" fill-opacity="0.12"/><circle cx="524.3" cy="75.0" r="0.5" fill-opacity="0.18"/><circle cx="240.2" cy="210.2" r="1.0" fill-opacity="0.14"/><circle cx="301.7" cy="231.3" r="0.5" fill-opacity="0.16"/><circle cx="669.8" cy="215.6" r="0.6" fill-opacity="0.14"/><circle cx="454.7" cy="70.0" r="0.6" fill-opacity="0.18"/><circle cx="576.5" cy="254.5" r="1.0" fill-opacity="0.08"/><circle cx="580.7" cy="281.9" r="0.8" fill-opacity="0.11"/><circle cx="429.5" cy="203.3" r="1.3" fill-opacity="0.09"/><circle cx="590.5" cy="33.2" r="1.6" fill-opacity="0.17"/><circle cx="85.7" cy="139.7" r="1.0" fill-opacity="0.09"/><circle cx="576.5" cy="107.7" r="1.0" fill-opacity="0.18"/><circle cx="261.3" cy="154.6" r="0.8" fill-opacity="0.12"/><circle cx="243.3" cy="127.7" r="1.0" fill-opacity="0.17"/><circle cx="264.6" cy="119.3" r="1.6" fill-opacity="0.21"/><circle cx="670.1" cy="135.2" r="0.7" fill-opacity="0.10"/><circle cx="210.7" cy="71.3" r="1.0" fill-opacity="0.14"/><circle cx="162.4" cy="254.7" r="0.7" fill-opacity="0.12"/><circle cx="572.1" cy="259.1" r="0.7" fill-opacity="0.10"/><circle cx="292.7" cy="278.8" r="0.5" fill-opacity="0.07"/><circle cx="178.9" cy="274.8" r="0.7" fill-opacity="0.24"/><circle cx="525.2" cy="177.9" r="0.8" fill-opacity="0.16"/><circle cx="353.6" cy="217.7" r="0.8" fill-opacity="0.15"/><circle cx="34.3" cy="215.3" r="0.8" fill-opacity="0.25"/><circle cx="460.2" cy="174.3" r="0.5" fill-opacity="0.14"/><circle cx="342.6" cy="207.8" r="1.0" fill-opacity="0.09"/><circle cx="133.1" cy="146.2" r="0.8" fill-opacity="0.15"/><circle cx="425.5" cy="301.9" r="0.7" fill-opacity="0.20"/><circle cx="507.1" cy="57.0" r="0.7" fill-opacity="0.12"/><circle cx="662.5" cy="255.9" r="1.0" fill-opacity="0.10"/><circle cx="446.5" cy="111.9" r="0.7" fill-opacity="0.22"/><circle cx="670.5" cy="272.7" r="0.8" fill-opacity="0.19"/><circle cx="358.1" cy="253.2" r="0.6" fill-opacity="0.16"/><circle cx="133.0" cy="81.4" r="1.3" fill-opacity="0.17"/><circle cx="78.4" cy="186.4" r="1.3" fill-opacity="0.19"/><circle cx="35.4" cy="143.5" r="1.6" fill-opacity="0.06"/><circle cx="483.1" cy="181.8" r="0.7" fill-opacity="0.14"/><circle cx="73.0" cy="36.2" r="0.5" fill-opacity="0.10"/><circle cx="340.6" cy="181.9" r="0.7" fill-opacity="0.23"/><circle cx="607.0" cy="171.4" r="0.6" fill-opacity="0.17"/><circle cx="282.4" cy="64.9" r="0.6" fill-opacity="0.16"/><circle cx="348.4" cy="39.9" r="0.5" fill-opacity="0.09"/><circle cx="357.1" cy="255.1" r="1.0" fill-opacity="0.15"/><circle cx="543.2" cy="208.2" r="1.3" fill-opacity="0.21"/><circle cx="223.3" cy="225.9" r="0.7" fill-opacity="0.12"/><circle cx="29.0" cy="202.4" r="1.6" fill-opacity="0.24"/><circle cx="397.1" cy="126.6" r="0.8" fill-opacity="0.18"/><circle cx="20.1" cy="91.6" r="0.8" fill-opacity="0.18"/><circle cx="649.9" cy="151.1" r="1.0" fill-opacity="0.11"/><circle cx="156.3" cy="75.2" r="1.0" fill-opacity="0.23"/><circle cx="217.9" cy="275.6" r="1.6" fill-opacity="0.15"/><circle cx="287.3" cy="100.3" r="0.8" fill-opacity="0.26"/><circle cx="52.2" cy="215.5" r="1.3" fill-opacity="0.20"/><circle cx="155.3" cy="115.8" r="1.3" fill-opacity="0.16"/><circle cx="538.1" cy="98.0" r="0.6" fill-opacity="0.09"/><circle cx="260.9" cy="34.1" r="0.7" fill-opacity="0.14"/><circle cx="250.2" cy="122.8" r="1.6" fill-opacity="0.14"/><circle cx="277.1" cy="49.7" r="0.5" fill-opacity="0.14"/><circle cx="618.7" cy="182.1" r="0.8" fill-opacity="0.10"/><circle cx="197.0" cy="96.3" r="0.5" fill-opacity="0.12"/><circle cx="23.9" cy="250.1" r="0.6" fill-opacity="0.20"/><circle cx="69.1" cy="105.1" r="1.6" fill-opacity="0.22"/><circle cx="378.8" cy="158.6" r="1.6" fill-opacity="0.22"/><circle cx="113.7" cy="127.6" r="1.3" fill-opacity="0.14"/><circle cx="428.7" cy="189.4" r="0.7" fill-opacity="0.25"/><circle cx="345.2" cy="93.6" r="0.8" fill-opacity="0.20"/><circle cx="638.2" cy="302.4" r="1.0" fill-opacity="0.24"/><circle cx="400.7" cy="131.7" r="0.6" fill-opacity="0.14"/><circle cx="348.8" cy="66.0" r="1.6" fill-opacity="0.08"/><circle cx="350.7" cy="179.0" r="0.7" fill-opacity="0.21"/><circle cx="519.4" cy="39.8" r="1.3" fill-opacity="0.17"/><circle cx="215.2" cy="137.7" r="0.5" fill-opacity="0.20"/><circle cx="527.0" cy="94.8" r="0.6" fill-opacity="0.19"/><circle cx="80.0" cy="184.3" r="0.7" fill-opacity="0.22"/><circle cx="515.2" cy="84.3" r="1.3" fill-opacity="0.12"/><circle cx="158.7" cy="66.2" r="1.3" fill-opacity="0.14"/><circle cx="245.5" cy="260.8" r="0.8" fill-opacity="0.21"/><circle cx="598.4" cy="265.4" r="0.6" fill-opacity="0.25"/><circle cx="125.2" cy="131.3" r="1.6" fill-opacity="0.19"/><circle cx="242.5" cy="143.8" r="1.3" fill-opacity="0.20"/><circle cx="316.9" cy="303.0" r="0.8" fill-opacity="0.13"/><circle cx="428.3" cy="81.2" r="0.5" fill-opacity="0.11"/><circle cx="415.0" cy="91.4" r="1.3" fill-opacity="0.07"/><circle cx="33.8" cy="75.9" r="0.6" fill-opacity="0.21"/><circle cx="111.6" cy="232.1" r="1.0" fill-opacity="0.12"/><circle cx="434.7" cy="80.7" r="1.6" fill-opacity="0.11"/><circle cx="340.6" cy="173.1" r="0.8" fill-opacity="0.19"/><circle cx="392.4" cy="285.6" r="0.5" fill-opacity="0.23"/><circle cx="527.2" cy="109.6" r="0.5" fill-opacity="0.24"/><circle cx="399.0" cy="220.6" r="0.6" fill-opacity="0.20"/><circle cx="31.9" cy="118.3" r="1.6" fill-opacity="0.24"/><circle cx="509.2" cy="55.3" r="1.3" fill-opacity="0.21"/><circle cx="675.7" cy="198.8" r="0.6" fill-opacity="0.12"/><circle cx="67.3" cy="288.5" r="0.8" fill-opacity="0.15"/><circle cx="235.0" cy="168.3" r="1.3" fill-opacity="0.23"/><circle cx="427.8" cy="154.7" r="0.5" fill-opacity="0.20"/><circle cx="145.0" cy="214.4" r="1.6" fill-opacity="0.25"/><circle cx="92.5" cy="238.5" r="0.5" fill-opacity="0.25"/><circle cx="559.9" cy="183.5" r="0.6" fill-opacity="0.17"/><circle cx="656.5" cy="204.8" r="1.0" fill-opacity="0.11"/><circle cx="652.6" cy="77.5" r="0.7" fill-opacity="0.14"/><circle cx="141.9" cy="116.2" r="0.6" fill-opacity="0.20"/><circle cx="332.9" cy="162.8" r="1.3" fill-opacity="0.11"/><circle cx="352.3" cy="152.6" r="1.3" fill-opacity="0.13"/><circle cx="207.6" cy="271.7" r="0.6" fill-opacity="0.18"/><circle cx="168.3" cy="202.6" r="0.5" fill-opacity="0.17"/><circle cx="516.5" cy="77.9" r="1.3" fill-opacity="0.09"/><circle cx="663.1" cy="259.5" r="0.8" fill-opacity="0.23"/><circle cx="83.7" cy="110.4" r="0.7" fill-opacity="0.16"/><circle cx="36.1" cy="274.8" r="0.7" fill-opacity="0.10"/><circle cx="477.1" cy="153.4" r="0.5" fill-opacity="0.09"/><circle cx="305.2" cy="186.2" r="0.7" fill-opacity="0.09"/><circle cx="55.1" cy="34.9" r="1.6" fill-opacity="0.16"/><circle cx="507.7" cy="121.9" r="1.3" fill-opacity="0.17"/><circle cx="79.9" cy="164.5" r="0.8" fill-opacity="0.16"/><circle cx="532.2" cy="119.2" r="0.7" fill-opacity="0.24"/><circle cx="438.8" cy="202.1" r="1.3" fill-opacity="0.19"/><circle cx="175.4" cy="98.7" r="0.6" fill-opacity="0.21"/><circle cx="23.9" cy="139.1" r="0.6" fill-opacity="0.12"/><circle cx="131.4" cy="204.9" r="1.6" fill-opacity="0.24"/><circle cx="464.0" cy="59.7" r="1.3" fill-opacity="0.23"/><circle cx="504.4" cy="120.5" r="0.6" fill-opacity="0.19"/><circle cx="245.7" cy="94.4" r="0.6" fill-opacity="0.17"/><circle cx="254.4" cy="257.3" r="0.6" fill-opacity="0.07"/><circle cx="78.8" cy="249.6" r="1.6" fill-opacity="0.26"/><circle cx="277.2" cy="45.7" r="0.6" fill-opacity="0.16"/><circle cx="341.7" cy="74.7" r="0.7" fill-opacity="0.18"/><circle cx="426.8" cy="70.5" r="0.6" fill-opacity="0.09"/><circle cx="303.9" cy="294.8" r="0.5" fill-opacity="0.26"/><circle cx="576.9" cy="161.9" r="0.6" fill-opacity="0.20"/><circle cx="8.9" cy="259.9" r="1.6" fill-opacity="0.23"/><circle cx="349.6" cy="70.8" r="0.5" fill-opacity="0.19"/><circle cx="351.8" cy="146.1" r="0.7" fill-opacity="0.07"/><circle cx="12.9" cy="291.1" r="0.6" fill-opacity="0.24"/><circle cx="117.2" cy="112.1" r="0.8" fill-opacity="0.22"/><circle cx="459.4" cy="185.8" r="0.8" fill-opacity="0.08"/><circle cx="223.9" cy="156.8" r="1.0" fill-opacity="0.24"/><circle cx="586.8" cy="296.1" r="1.0" fill-opacity="0.18"/><circle cx="550.5" cy="48.3" r="1.3" fill-opacity="0.13"/><circle cx="448.2" cy="185.1" r="0.8" fill-opacity="0.25"/><circle cx="329.1" cy="207.4" r="0.7" fill-opacity="0.23"/><circle cx="362.4" cy="203.7" r="1.6" fill-opacity="0.10"/><circle cx="461.7" cy="153.2" r="0.5" fill-opacity="0.09"/><circle cx="395.0" cy="182.4" r="0.8" fill-opacity="0.13"/><circle cx="168.0" cy="151.6" r="0.7" fill-opacity="0.08"/><circle cx="127.9" cy="273.2" r="1.0" fill-opacity="0.21"/><circle cx="155.2" cy="258.9" r="1.3" fill-opacity="0.08"/><circle cx="362.6" cy="100.2" r="0.8" fill-opacity="0.11"/><circle cx="314.0" cy="178.7" r="1.3" fill-opacity="0.08"/><circle cx="350.8" cy="191.5" r="0.5" fill-opacity="0.23"/><circle cx="462.3" cy="248.9" r="0.6" fill-opacity="0.23"/><circle cx="375.9" cy="225.7" r="1.6" fill-opacity="0.25"/><circle cx="426.8" cy="292.3" r="1.0" fill-opacity="0.08"/><circle cx="563.2" cy="138.2" r="0.6" fill-opacity="0.25"/><circle cx="135.4" cy="160.8" r="0.5" fill-opacity="0.09"/><circle cx="527.0" cy="47.6" r="0.6" fill-opacity="0.07"/><circle cx="35.0" cy="222.2" r="0.6" fill-opacity="0.15"/><circle cx="87.8" cy="68.7" r="0.5" fill-opacity="0.18"/><circle cx="591.3" cy="184.6" r="1.3" fill-opacity="0.23"/><circle cx="119.6" cy="234.0" r="0.7" fill-opacity="0.22"/><circle cx="500.2" cy="35.2" r="0.7" fill-opacity="0.08"/><circle cx="256.9" cy="231.8" r="0.7" fill-opacity="0.20"/><circle cx="36.1" cy="195.6" r="0.5" fill-opacity="0.13"/><circle cx="226.3" cy="195.4" r="0.5" fill-opacity="0.25"/><circle cx="459.4" cy="101.0" r="0.6" fill-opacity="0.20"/><circle cx="21.3" cy="299.9" r="0.8" fill-opacity="0.08"/><circle cx="21.0" cy="61.9" r="1.6" fill-opacity="0.11"/><circle cx="107.7" cy="284.3" r="1.6" fill-opacity="0.20"/><circle cx="262.2" cy="71.1" r="0.7" fill-opacity="0.17"/><circle cx="469.0" cy="251.0" r="0.8" fill-opacity="0.06"/><circle cx="236.4" cy="72.9" r="1.0" fill-opacity="0.16"/><circle cx="28.2" cy="258.9" r="0.5" fill-opacity="0.10"/><circle cx="555.3" cy="216.1" r="0.8" fill-opacity="0.23"/><circle cx="655.2" cy="219.8" r="0.8" fill-opacity="0.14"/><circle cx="591.9" cy="197.5" r="0.5" fill-opacity="0.13"/><circle cx="360.9" cy="116.4" r="0.6" fill-opacity="0.18"/><circle cx="36.2" cy="78.0" r="0.7" fill-opacity="0.21"/><circle cx="229.0" cy="158.9" r="0.7" fill-opacity="0.12"/><circle cx="231.8" cy="163.0" r="0.6" fill-opacity="0.06"/><circle cx="314.8" cy="299.3" r="0.5" fill-opacity="0.19"/><circle cx="494.1" cy="70.9" r="0.8" fill-opacity="0.11"/><circle cx="342.0" cy="103.0" r="1.0" fill-opacity="0.17"/><circle cx="398.6" cy="69.7" r="1.3" fill-opacity="0.07"/><circle cx="382.6" cy="240.9" r="1.6" fill-opacity="0.10"/><circle cx="292.6" cy="186.9" r="0.5" fill-opacity="0.13"/><circle cx="195.7" cy="247.5" r="1.6" fill-opacity="0.22"/><circle cx="101.6" cy="51.5" r="1.6" fill-opacity="0.13"/><circle cx="250.0" cy="263.2" r="0.6" fill-opacity="0.13"/><circle cx="376.0" cy="142.0" r="0.5" fill-opacity="0.20"/><circle cx="457.1" cy="271.5" r="1.6" fill-opacity="0.16"/><circle cx="253.1" cy="98.0" r="0.6" fill-opacity="0.26"/><circle cx="108.0" cy="87.7" r="1.6" fill-opacity="0.19"/><circle cx="278.3" cy="139.3" r="1.6" fill-opacity="0.12"/><circle cx="120.2" cy="50.0" r="0.7" fill-opacity="0.20"/><circle cx="175.9" cy="187.0" r="1.3" fill-opacity="0.25"/><circle cx="235.1" cy="281.7" r="1.0" fill-opacity="0.24"/><circle cx="398.9" cy="114.4" r="0.7" fill-opacity="0.26"/><circle cx="246.2" cy="241.9" r="0.8" fill-opacity="0.20"/><circle cx="624.7" cy="259.3" r="0.7" fill-opacity="0.24"/><circle cx="191.8" cy="101.8" r="0.5" fill-opacity="0.21"/><circle cx="426.7" cy="96.2" r="0.5" fill-opacity="0.10"/><circle cx="274.7" cy="86.3" r="1.0" fill-opacity="0.12"/><circle cx="343.3" cy="59.0" r="0.6" fill-opacity="0.21"/><circle cx="652.3" cy="194.9" r="0.5" fill-opacity="0.07"/><circle cx="554.0" cy="188.0" r="1.3" fill-opacity="0.09"/><circle cx="133.1" cy="177.5" r="0.5" fill-opacity="0.19"/><circle cx="625.3" cy="89.5" r="0.7" fill-opacity="0.23"/><circle cx="25.1" cy="163.8" r="1.0" fill-opacity="0.20"/><circle cx="233.3" cy="47.6" r="0.8" fill-opacity="0.22"/><circle cx="65.4" cy="198.1" r="1.6" fill-opacity="0.16"/><circle cx="407.6" cy="101.7" r="0.8" fill-opacity="0.23"/><circle cx="24.2" cy="117.9" r="1.3" fill-opacity="0.26"/><circle cx="44.5" cy="198.4" r="1.3" fill-opacity="0.23"/><circle cx="112.0" cy="37.0" r="0.6" fill-opacity="0.09"/><circle cx="521.0" cy="56.4" r="1.6" fill-opacity="0.13"/><circle cx="237.6" cy="216.3" r="1.6" fill-opacity="0.17"/><circle cx="447.4" cy="195.0" r="0.7" fill-opacity="0.11"/><circle cx="421.5" cy="252.4" r="0.8" fill-opacity="0.21"/><circle cx="526.9" cy="115.8" r="1.6" fill-opacity="0.17"/><circle cx="480.3" cy="183.6" r="0.7" fill-opacity="0.16"/><circle cx="637.4" cy="67.7" r="0.5" fill-opacity="0.17"/><circle cx="73.9" cy="251.3" r="0.7" fill-opacity="0.09"/><circle cx="428.4" cy="140.6" r="0.5" fill-opacity="0.25"/><circle cx="425.5" cy="65.1" r="1.0" fill-opacity="0.16"/><circle cx="379.0" cy="81.3" r="1.0" fill-opacity="0.13"/><circle cx="107.0" cy="80.1" r="1.3" fill-opacity="0.23"/><circle cx="529.0" cy="175.2" r="0.7" fill-opacity="0.22"/><circle cx="169.5" cy="298.2" r="0.8" fill-opacity="0.10"/><circle cx="618.3" cy="276.2" r="0.8" fill-opacity="0.15"/><circle cx="224.0" cy="276.8" r="0.5" fill-opacity="0.19"/><circle cx="17.3" cy="250.6" r="0.8" fill-opacity="0.19"/><circle cx="242.0" cy="93.8" r="0.8" fill-opacity="0.14"/><circle cx="622.8" cy="288.1" r="1.3" fill-opacity="0.23"/><circle cx="27.6" cy="37.6" r="1.3" fill-opacity="0.15"/><circle cx="162.0" cy="87.1" r="1.6" fill-opacity="0.15"/><circle cx="193.7" cy="270.3" r="0.8" fill-opacity="0.10"/><circle cx="388.6" cy="74.5" r="1.6" fill-opacity="0.25"/><circle cx="522.4" cy="290.6" r="0.6" fill-opacity="0.22"/><circle cx="196.3" cy="121.8" r="0.8" fill-opacity="0.23"/><circle cx="174.3" cy="118.7" r="1.0" fill-opacity="0.18"/><circle cx="310.5" cy="189.0" r="1.6" fill-opacity="0.10"/><circle cx="599.0" cy="129.7" r="1.6" fill-opacity="0.21"/><circle cx="301.2" cy="149.8" r="0.6" fill-opacity="0.26"/><circle cx="206.4" cy="38.6" r="0.5" fill-opacity="0.09"/><circle cx="618.5" cy="68.1" r="0.7" fill-opacity="0.09"/><circle cx="500.1" cy="58.4" r="0.6" fill-opacity="0.15"/><circle cx="273.1" cy="144.2" r="1.3" fill-opacity="0.24"/><circle cx="487.0" cy="271.0" r="0.5" fill-opacity="0.18"/><circle cx="141.9" cy="202.0" r="0.5" fill-opacity="0.07"/><circle cx="345.2" cy="94.8" r="0.8" fill-opacity="0.20"/><circle cx="495.1" cy="45.1" r="0.7" fill-opacity="0.07"/><circle cx="80.9" cy="291.4" r="0.6" fill-opacity="0.17"/><circle cx="8.7" cy="92.7" r="1.0" fill-opacity="0.09"/><circle cx="501.6" cy="167.7" r="0.5" fill-opacity="0.17"/><circle cx="569.5" cy="291.4" r="0.5" fill-opacity="0.13"/><circle cx="151.1" cy="294.2" r="0.6" fill-opacity="0.21"/><circle cx="189.9" cy="80.0" r="0.7" fill-opacity="0.11"/><circle cx="654.4" cy="85.2" r="0.5" fill-opacity="0.14"/><circle cx="379.9" cy="130.3" r="0.5" fill-opacity="0.13"/><circle cx="34.7" cy="155.0" r="0.7" fill-opacity="0.17"/><circle cx="469.5" cy="298.2" r="1.6" fill-opacity="0.21"/><circle cx="187.0" cy="146.4" r="1.0" fill-opacity="0.14"/><circle cx="658.9" cy="136.9" r="0.8" fill-opacity="0.24"/><circle cx="545.5" cy="275.4" r="1.3" fill-opacity="0.06"/><circle cx="414.2" cy="283.0" r="0.7" fill-opacity="0.20"/><circle cx="496.1" cy="300.6" r="1.6" fill-opacity="0.10"/><circle cx="84.8" cy="260.5" r="1.6" fill-opacity="0.07"/><circle cx="487.0" cy="142.0" r="1.0" fill-opacity="0.12"/><circle cx="440.0" cy="180.8" r="0.7" fill-opacity="0.15"/><circle cx="394.1" cy="160.3" r="1.3" fill-opacity="0.23"/><circle cx="348.8" cy="192.5" r="0.8" fill-opacity="0.11"/><circle cx="428.8" cy="233.4" r="0.8" fill-opacity="0.13"/><circle cx="50.0" cy="296.5" r="0.7" fill-opacity="0.18"/><circle cx="460.7" cy="119.3" r="1.3" fill-opacity="0.22"/><circle cx="452.0" cy="282.4" r="1.6" fill-opacity="0.11"/><circle cx="615.9" cy="160.3" r="1.3" fill-opacity="0.13"/><circle cx="402.0" cy="186.7" r="0.6" fill-opacity="0.07"/><circle cx="514.4" cy="130.7" r="0.6" fill-opacity="0.17"/><circle cx="551.9" cy="96.7" r="0.6" fill-opacity="0.09"/><circle cx="450.4" cy="80.2" r="1.6" fill-opacity="0.23"/><circle cx="443.9" cy="278.8" r="0.7" fill-opacity="0.14"/><circle cx="564.5" cy="253.6" r="0.5" fill-opacity="0.14"/><circle cx="477.8" cy="133.7" r="0.7" fill-opacity="0.13"/><circle cx="545.2" cy="173.3" r="0.8" fill-opacity="0.19"/><circle cx="191.3" cy="110.7" r="0.8" fill-opacity="0.20"/><circle cx="308.0" cy="161.6" r="1.6" fill-opacity="0.09"/><circle cx="353.6" cy="33.6" r="0.6" fill-opacity="0.13"/><circle cx="355.9" cy="96.4" r="0.7" fill-opacity="0.16"/><circle cx="544.0" cy="100.5" r="1.0" fill-opacity="0.10"/><circle cx="389.3" cy="47.6" r="0.6" fill-opacity="0.12"/><circle cx="371.9" cy="280.5" r="0.7" fill-opacity="0.11"/><circle cx="565.9" cy="56.8" r="1.3" fill-opacity="0.16"/><circle cx="66.5" cy="66.8" r="1.6" fill-opacity="0.12"/><circle cx="530.3" cy="281.5" r="1.3" fill-opacity="0.15"/><circle cx="253.0" cy="225.1" r="0.7" fill-opacity="0.25"/><circle cx="295.7" cy="196.6" r="0.7" fill-opacity="0.13"/><circle cx="265.2" cy="188.8" r="1.0" fill-opacity="0.10"/><circle cx="657.8" cy="224.9" r="0.7" fill-opacity="0.07"/><circle cx="143.1" cy="265.1" r="0.5" fill-opacity="0.21"/><circle cx="261.2" cy="174.5" r="0.8" fill-opacity="0.25"/><circle cx="437.8" cy="246.5" r="0.5" fill-opacity="0.18"/><circle cx="316.9" cy="157.3" r="1.6" fill-opacity="0.15"/><circle cx="673.6" cy="79.8" r="0.5" fill-opacity="0.15"/><circle cx="336.2" cy="170.7" r="1.6" fill-opacity="0.06"/><circle cx="162.7" cy="86.3" r="1.0" fill-opacity="0.07"/><circle cx="462.5" cy="182.1" r="1.6" fill-opacity="0.14"/><circle cx="315.1" cy="56.4" r="1.6" fill-opacity="0.08"/><circle cx="554.7" cy="59.6" r="0.5" fill-opacity="0.23"/><circle cx="151.5" cy="155.1" r="1.6" fill-opacity="0.20"/><circle cx="483.4" cy="162.8" r="0.5" fill-opacity="0.17"/><circle cx="508.1" cy="260.6" r="0.6" fill-opacity="0.26"/><circle cx="554.3" cy="268.3" r="0.6" fill-opacity="0.12"/><circle cx="134.5" cy="298.2" r="0.6" fill-opacity="0.26"/><circle cx="191.0" cy="103.1" r="0.7" fill-opacity="0.14"/><circle cx="451.8" cy="113.0" r="0.8" fill-opacity="0.16"/><circle cx="288.5" cy="45.9" r="0.7" fill-opacity="0.11"/><circle cx="261.8" cy="150.2" r="1.0" fill-opacity="0.11"/><circle cx="142.3" cy="46.1" r="1.0" fill-opacity="0.19"/><circle cx="631.7" cy="209.9" r="1.3" fill-opacity="0.18"/><circle cx="252.0" cy="249.2" r="0.6" fill-opacity="0.15"/><circle cx="480.6" cy="211.9" r="1.3" fill-opacity="0.12"/><circle cx="364.2" cy="142.8" r="1.0" fill-opacity="0.22"/><circle cx="30.7" cy="91.5" r="0.8" fill-opacity="0.12"/><circle cx="483.1" cy="249.5" r="1.0" fill-opacity="0.18"/><circle cx="279.0" cy="229.2" r="0.6" fill-opacity="0.24"/><circle cx="45.7" cy="149.5" r="1.3" fill-opacity="0.08"/><circle cx="98.8" cy="270.5" r="1.6" fill-opacity="0.18"/><circle cx="127.7" cy="282.0" r="1.0" fill-opacity="0.21"/></g></svg>
<svg class="abs" style="left:0;top:0" width="1024" height="460">
<g stroke="#5a5a5a" stroke-width="1" fill="none">
<line x1="6" y1="31" x2="678" y2="304"/>
<line x1="6" y1="304" x2="678" y2="31"/>
<polyline points="342,31 678,167.5 342,304 6,167.5 342,31"/>
</g></svg>
<div class="t num" style="left:170px;top:77px">7</div>
<div class="t num" style="left:149px;top:94px">8</div>
<div class="t num" style="left:508px;top:77px">5</div>
<div class="t num" style="left:531px;top:94px">4</div>
<div class="t num" style="left:339.6px;top:146px">6</div>
<div class="t num" style="left:315.6px;top:163px">9</div>
<div class="t num" style="left:364.6px;top:163px">3</div>
<div class="t num" style="left:336.4px;top:180px">12</div>
<div class="t num" style="left:146px;top:231px">10</div>
<div class="t num" style="left:168px;top:248px">11</div>
<div class="t num" style="left:530px;top:231px">2</div>
<div class="t num" style="left:507px;top:248px">1</div>
<div class="t" style="left:467px;top:50.4px"><span class="pl" style="color:#7a4040">Ke</span> <span class="sm">14:45 PPh</span></div>
<div class="t" style="left:299px;top:85.5px"><span class="pl" style="color:#9a6448">As</span> <span class="sm">02:23 UPh</span></div>
<div class="t" style="left:299px;top:103.7px"><span class="pl" style="color:#111">Mun</span> <span class="sm">18:43 Has</span></div>
<div class="t" style="left:553px;top:95.2px"><span class="pl" style="color:#111">Mo</span> <span class="sm">22:37 Asl</span></div>
<div class="t" style="left:467px;top:163.4px"><span class="pl" style="color:#e08020">JuR</span> <span class="sm">21:00 Pun</span></div>
<div class="t" style="left:299px;top:231px"><span class="pl" style="color:#2a2ab0">Sa</span> <span class="sm">07:33 UBh</span></div>
<div class="t" style="left:130px;top:258.3px;font-size:9.5px;line-height:8.85px">
<span style="color:#e04646">Ma</span> 04:57 Dha<br><span style="color:#6e6e86">Ra</span> 14:45 Sat<br><span style="color:#cc3c3c">Su</span> 16:44 Sat<br><span style="color:#2f9f2f">MeR</span> 27:29 PBh<br><span style="color:#c032e0">Ve</span> 29:41 PBh</div>
<div class="box" style="left:686px;top:28px;width:335px;height:128px;background:#d0e7fc;border:1px solid #8ea6b8;border-top:2px solid #5f8a7c"></div>
<svg class="abs" style="left:0;top:0" width="1024" height="460" font-family="Liberation Serif" font-size="7.8">
<rect x="743.5" y="46.5" width="261.0" height="86.0" fill="#fbfbfe" stroke="#111" stroke-width="1.2"/>
<g stroke="#777" stroke-width="0.9">
<line x1="735" y1="46.50" x2="1004.5" y2="46.50"/>
<line x1="735" y1="55.10" x2="1004.5" y2="55.10"/>
<line x1="735" y1="63.70" x2="1004.5" y2="63.70"/>
<line x1="735" y1="72.30" x2="1004.5" y2="72.30"/>
<line x1="735" y1="80.90" x2="1004.5" y2="80.90"/>
<line x1="735" y1="89.50" x2="1004.5" y2="89.50"/>
<line x1="735" y1="98.10" x2="1004.5" y2="98.10"/>
<line x1="735" y1="106.70" x2="1004.5" y2="106.70"/>
<line x1="735" y1="115.30" x2="1004.5" y2="115.30"/>
<line x1="735" y1="123.90" x2="1004.5" y2="123.90"/>
<line x1="735" y1="132.50" x2="1004.5" y2="132.50"/>
</g><g fill="#04f204" stroke="#185818" stroke-width="1">
<rect x="753.34" y="86.92" width="19" height="45.58"/>
<rect x="790.63" y="80.04" width="19" height="52.46"/>
<rect x="827.91" y="77.03" width="19" height="55.47"/>
<rect x="865.20" y="94.66" width="19" height="37.84"/>
<rect x="902.49" y="71.01" width="19" height="61.49"/>
<rect x="939.77" y="73.16" width="19" height="59.34"/>
<rect x="977.06" y="70.58" width="19" height="61.92"/>
</g><g fill="#222" text-anchor="end">
<text x="735" y="49.30">200%</text>
<text x="735" y="57.90">180%</text>
<text x="735" y="66.50">160%</text>
<text x="735" y="75.10">140%</text>
<text x="735" y="83.70">120%</text>
<text x="735" y="92.30">100%</text>
<text x="735" y="100.90">80%</text>
<text x="735" y="109.50">60%</text>
<text x="735" y="118.10">40%</text>
<text x="735" y="126.70">20%</text>
<text x="735" y="135.30">0%</text>
</g><g fill="#222" text-anchor="middle">
<text x="853" y="37.5">Shad Bala</text>
<text x="762.14" y="141">Su</text>
<text x="799.43" y="141">Mo</text>
<text x="836.71" y="141">Ma</text>
<text x="874.00" y="141">Me</text>
<text x="911.29" y="141">Ju</text>
<text x="948.57" y="141">Ve</text>
<text x="985.86" y="141">Sa</text>
<text x="853" y="150">Planets (Progression (75) 1 Mar 2026&#160; 18:55:31)</text>
<text transform="translate(700,89) rotate(-90)">Bala%</text>
</g></svg>
<div class="box" style="left:686px;top:178px;width:334px;height:127px;background:#fefee6;border:1px solid #8a8a80;border-top:2px solid #66724e"></div>
<div class="abs" style="left:0;top:0;font-size:10px;color:#222">
<div class="t" style="left:720px;top:180.0px">Griha</div><div class="t" style="left:815px;top:180.0px">Hudda</div><div class="t" style="left:910px;top:180.0px">Navamsha</div>
<div class="t" style="left:767.5px;top:192.4px">Uchcha</div><div class="t" style="left:862.5px;top:192.4px">Drekkana</div><div class="t" style="left:958px;top:192.4px">Total</div>
<div class="t" style="left:688px;top:206.00px;color:#cc3c3c">Su</div><div class="t" style="left:720px;top:206.00px">15.00</div><div class="t" style="left:767.5px;top:206.00px">14.08</div><div class="t" style="left:815px;top:206.00px">11.25</div><div class="t" style="left:862.5px;top:206.00px">2.50</div><div class="t" style="left:910px;top:206.00px">3.75</div><div class="t" style="left:958px;top:206.00px">11.65</div>
<div class="t" style="left:688px;top:218.25px;color:#1e1e1e">Mo</div><div class="t" style="left:720px;top:218.25px">30.00</div><div class="t" style="left:767.5px;top:218.25px">11.15</div><div class="t" style="left:815px;top:218.25px">7.50</div><div class="t" style="left:862.5px;top:218.25px">10.00</div><div class="t" style="left:910px;top:218.25px">3.75</div><div class="t" style="left:958px;top:218.25px">15.60</div>
<div class="t" style="left:688px;top:230.50px;color:#e04646">Ma</div><div class="t" style="left:720px;top:230.50px">15.00</div><div class="t" style="left:767.5px;top:230.50px">19.23</div><div class="t" style="left:815px;top:230.50px">3.75</div><div class="t" style="left:862.5px;top:230.50px">2.50</div><div class="t" style="left:910px;top:230.50px">5.00</div><div class="t" style="left:958px;top:230.50px">11.37</div>
<div class="t" style="left:688px;top:242.75px;color:#2f9f2f">Me</div><div class="t" style="left:720px;top:242.75px">15.00</div><div class="t" style="left:767.5px;top:242.75px">1.95</div><div class="t" style="left:815px;top:242.75px">7.50</div><div class="t" style="left:862.5px;top:242.75px">5.00</div><div class="t" style="left:910px;top:242.75px">5.00</div><div class="t" style="left:958px;top:242.75px">8.61</div>
<div class="t" style="left:688px;top:255.00px;color:#e3a043">Ju</div><div class="t" style="left:720px;top:255.00px">22.50</div><div class="t" style="left:767.5px;top:255.00px">18.45</div><div class="t" style="left:815px;top:255.00px">11.25</div><div class="t" style="left:862.5px;top:255.00px">7.50</div><div class="t" style="left:910px;top:255.00px">3.75</div><div class="t" style="left:958px;top:255.00px">15.86</div>
<div class="t" style="left:688px;top:267.25px;color:#c032e0">Ve</div><div class="t" style="left:720px;top:267.25px">15.00</div><div class="t" style="left:767.5px;top:267.25px">16.97</div><div class="t" style="left:815px;top:267.25px">7.50</div><div class="t" style="left:862.5px;top:267.25px">5.00</div><div class="t" style="left:910px;top:267.25px">1.25</div><div class="t" style="left:958px;top:267.25px">11.43</div>
<div class="t" style="left:688px;top:279.50px;color:#3434c0">Sa</div><div class="t" style="left:720px;top:279.50px">7.50</div><div class="t" style="left:767.5px;top:279.50px">4.71</div><div class="t" style="left:815px;top:279.50px">7.50</div><div class="t" style="left:862.5px;top:279.50px">10.00</div><div class="t" style="left:910px;top:279.50px">2.50</div><div class="t" style="left:958px;top:279.50px">8.05</div>
</div>
<div class="box" style="left:4px;top:328px;width:334px;height:127px;background:#fefee6;border:2px solid #6e6e6a;border-top-color:#6f7c58"></div>
<svg class="abs" style="left:0;top:0" width="1024" height="460">
<g stroke="#555" stroke-width="1" fill="none">
<line x1="6" y1="330" x2="336" y2="453"/>
<line x1="6" y1="453" x2="336" y2="330"/>
<polyline points="171,330 336,391.5 171,453 6,391.5 171,330"/>
</g></svg>
<div class="abs" style="left:0;top:0;font-size:10px;color:#222">
<div class="t" style="left:81.5px;top:333px;color:#6e6e86">Ra</div>
<div class="t" style="left:30.5px;top:356px;color:#cc3c3c">Su</div>
<div class="t" style="left:157.5px;top:356px"><span style="color:#9a6448">As</span> Mo</div>
<div class="t" style="left:297.5px;top:356px;color:#e04646">Ma</div>
<div class="t" style="left:80px;top:387px;color:#e3a043">JuR</div>
<div class="t" style="left:295.5px;top:410px">Mun</div>
<div class="t" style="left:299px;top:425px;color:#3434c0">Sa</div>
<div class="t" style="left:71.5px;top:441px"><span style="color:#2f9f2f">MeR</span> <span style="color:#c032e0">Ve</span></div>
<div class="t" style="left:247px;top:440px;color:#7a4040">Ke</div>
</div>
<div class="abs" style="left:0;top:0"><div class="t n9" style="left:82.6px;top:350.5px">11</div><div class="t n9" style="left:61.5px;top:358.7px">12</div><div class="t n9" style="left:249.4px;top:349.7px">9</div><div class="t n9" style="left:270.7px;top:357.7px">8</div><div class="t n9" style="left:165.5px;top:381.4px">10</div><div class="t n9" style="left:146.8px;top:389.5px">1</div><div class="t n9" style="left:188.3px;top:388.7px">7</div><div class="t n9" style="left:167.8px;top:396.2px">4</div><div class="t n9" style="left:270.7px;top:418.7px">6</div><div class="t n9" style="left:248.4px;top:426.7px">5</div><div class="t n9" style="left:64.2px;top:419.7px">2</div><div class="t n9" style="left:83.7px;top:427.5px">3</div></div>
<div class="box" style="left:345px;top:328px;width:335px;height:127px;background:#fefee6;border:1px solid #707068"></div>
<div class="abs" style="left:346px;top:341.4px;width:333px;height:1px;background:#8a8a80"></div>
<div class="abs" style="left:0;top:0;font-size:11.5px;color:#222">
<div class="t" style="left:356px;top:342.60px"><span style="color:#2f9f2f">Me</span>-Mo-<span style="color:#e3a043">Ju</span>-<span style="color:#e3a043">Ju</span></div><div class="t" style="left:434.5px;top:342.60px">Sun</div><div class="t" style="left:466px;top:342.60px">01-03-2026</div>
<div class="t" style="left:356px;top:355.20px"><span style="color:#2f9f2f">Me</span>-Mo-<span style="color:#e3a043">Ju</span>-<span style="color:#3434c0">Sa</span></div><div class="t" style="left:434.5px;top:355.20px">Sun</div><div class="t" style="left:466px;top:355.20px">01-03-2026</div>
<div class="t" style="left:356px;top:367.80px"><span style="color:#2f9f2f">Me</span>-Mo-<span style="color:#e3a043">Ju</span>-<span style="color:#2f9f2f">Me</span></div><div class="t" style="left:434.5px;top:367.80px">Sun</div><div class="t" style="left:466px;top:367.80px">01-03-2026</div>
<div class="t" style="left:356px;top:380.40px"><span style="color:#2f9f2f">Me</span>-Mo-<span style="color:#e3a043">Ju</span>-<span style="color:#7a4040">Ke</span></div><div class="t" style="left:434.5px;top:380.40px">Sun</div><div class="t" style="left:466px;top:380.40px">01-03-2026</div>
<div class="t" style="left:356px;top:393.00px"><span style="color:#2f9f2f">Me</span>-Mo-<span style="color:#e3a043">Ju</span>-<span style="color:#c032e0">Ve</span></div><div class="t" style="left:434.5px;top:393.00px">Sun</div><div class="t" style="left:466px;top:393.00px">01-03-2026</div>
<div class="t" style="left:356px;top:405.60px"><span style="color:#2f9f2f">Me</span>-Mo-<span style="color:#e3a043">Ju</span>-<span style="color:#cc3c3c">Su</span></div><div class="t" style="left:434.5px;top:405.60px">Sun</div><div class="t" style="left:466px;top:405.60px">01-03-2026</div>
<div class="t" style="left:356px;top:418.20px"><span style="color:#2f9f2f">Me</span>-Mo-<span style="color:#e3a043">Ju</span>-<span style="color:#1e1e1e">Mo</span></div><div class="t" style="left:434.5px;top:418.20px">Sun</div><div class="t" style="left:466px;top:418.20px">01-03-2026</div>
<div class="t" style="left:356px;top:430.80px"><span style="color:#2f9f2f">Me</span>-Mo-<span style="color:#e3a043">Ju</span>-<span style="color:#e04646">Ma</span></div><div class="t" style="left:434.5px;top:430.80px">Sun</div><div class="t" style="left:466px;top:430.80px">01-03-2026</div>
<div class="t" style="left:356px;top:443.40px"><span style="color:#2f9f2f">Me</span>-Mo-<span style="color:#e3a043">Ju</span>-<span style="color:#6e6e86">Ra</span></div><div class="t" style="left:434.5px;top:443.40px">Sun</div><div class="t" style="left:466px;top:443.40px">01-03-2026</div>
</div>
<svg class="abs" style="left:0;top:0" width="1024" height="460">
<defs><linearGradient id="bg" x1="0" y1="0" x2="0" y2="1"><stop offset="0" stop-color="#3a9ede"/><stop offset="1" stop-color="#1f7fc0"/></linearGradient></defs>
<g fill="url(#bg)" stroke="#1c6fa8" stroke-width="0.8">
<rect x="585.8" y="330.3" width="20.6" height="10.2" rx="5.1"/>
<rect x="608.8" y="330.3" width="20.6" height="10.2" rx="5.1"/>
<rect x="631.8" y="330.3" width="20.6" height="10.2" rx="5.1"/>
<rect x="654.7" y="330.3" width="20.6" height="10.2" rx="5.1"/>
</g>
<g fill="#fff">
<rect x="592.2" y="334.4" width="7.7" height="2"/>
<rect x="615.6" y="334.4" width="6.8" height="2"/>
<rect x="618" y="331.9" width="2" height="7"/>
<polygon points="642.1,332.4 647.6,335.6 637,335.6"/>
<rect x="639.2" y="335.5" width="5.8" height="2.6"/>
<rect x="661.8" y="332.6" width="6.5" height="2.4"/>
<polygon points="659.2,334.9 671,334.9 665,338.4"/>
</g></svg>
<div class="box" style="left:686px;top:328px;width:335px;height:127px;background:#fefee6;border:1px solid #8a8a80"></div>
<div class="abs" style="left:0;top:0;font-size:9.7px;color:#222">
<div class="t" style="left:688.5px;top:332.30px">Year lord</div><div class="t" style="left:774px;top:332.30px">Me</div>
<div class="t" style="left:688.5px;top:344.57px">Muntha:</div><div class="t" style="left:774px;top:344.57px">Vir 18:43</div>
<div class="t" style="left:688.5px;top:356.84px">Panchadhikaris:</div><div class="t" style="left:774px;top:356.84px"></div>
<div class="t" style="left:688.5px;top:369.11px">Muntha Pati</div><div class="t" style="left:774px;top:369.11px">Me (8.61)</div>
<div class="t" style="left:688.5px;top:381.38px">Janma Lagna Pati</div><div class="t" style="left:774px;top:381.38px">Me (8.61)</div>
<div class="t" style="left:688.5px;top:393.65px">Varsha Lagna Pati</div><div class="t" style="left:774px;top:393.65px">Me (8.61)</div>
<div class="t" style="left:688.5px;top:405.92px">Trirashi Pati</div><div class="t" style="left:774px;top:405.92px">Ve (11.43)</div>
<div class="t" style="left:688.5px;top:418.19px">Dinaratri Pati</div><div class="t" style="left:774px;top:418.19px">Mo (15.60)</div>
</div>
<div class="abs" style="left:0;top:457px;width:1024px;height:3px;background:#d9d9d6"></div>
</div>
</body></html>
